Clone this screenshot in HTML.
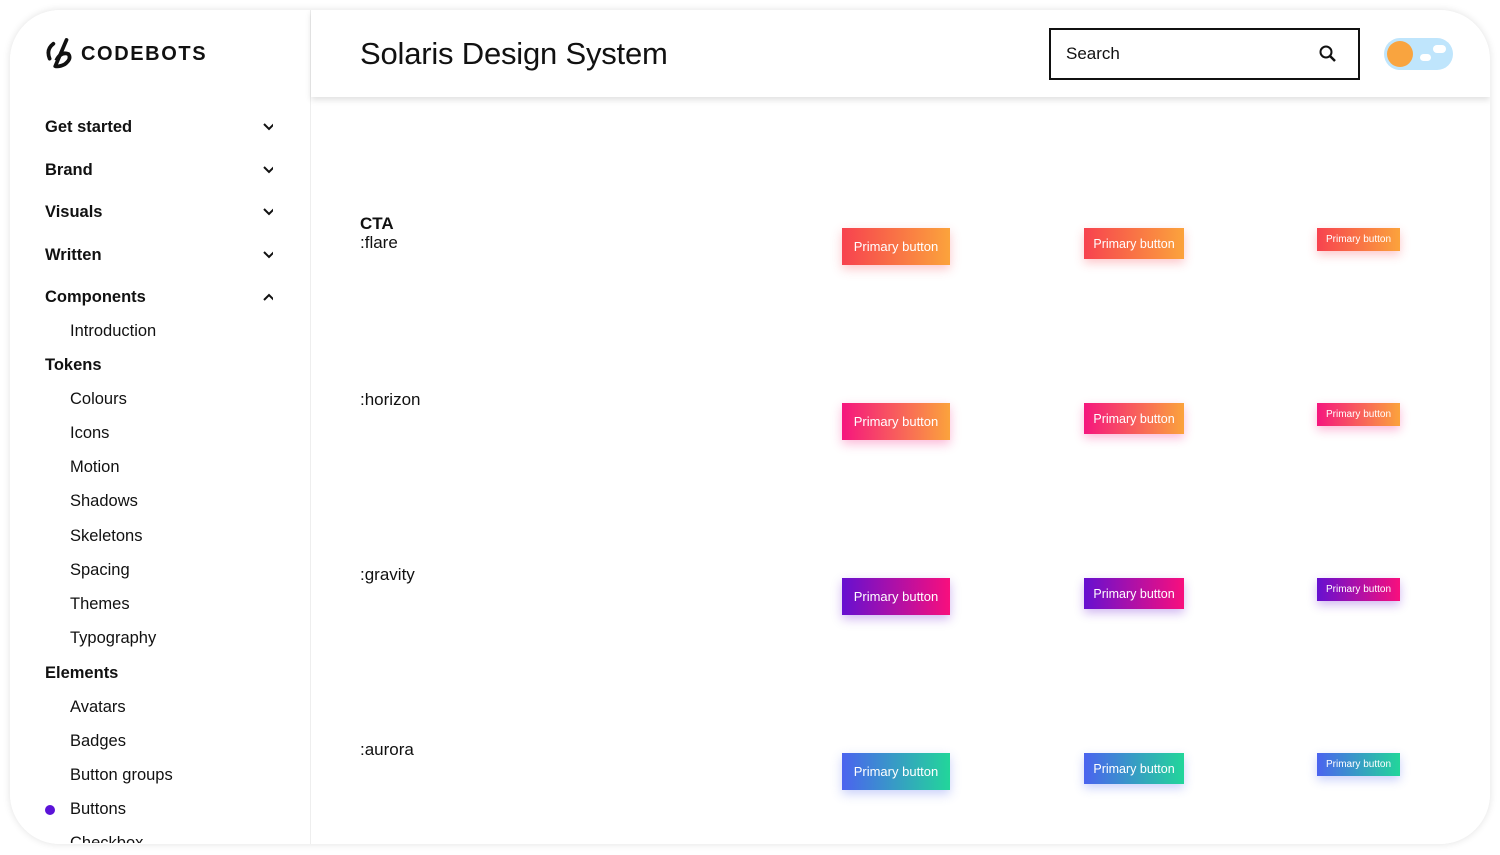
<!DOCTYPE html>
<html><head><meta charset="utf-8"><style>
*{margin:0;padding:0;box-sizing:border-box}
body{width:1500px;height:855px;background:#fff;font-family:"Liberation Sans",sans-serif;color:#111;position:relative;overflow:hidden}
.frame{position:absolute;left:10px;top:10px;width:1480px;height:834px;border-radius:50px;box-shadow:0 0 8px rgba(0,0,0,.12);overflow:hidden;background:#fff}
.side{position:absolute;left:0;top:0;width:301px;height:834px;background:#fff;border-right:1px solid #eee}
.main{position:absolute;left:301px;top:0;right:0;bottom:0;background:#fff}
.hdr{position:absolute;left:301px;top:0;right:0;height:87px;background:#fff;box-shadow:0 3px 6px rgba(0,0,0,.12);z-index:2}
.logo{position:absolute;left:34px;top:27px;display:flex;align-items:center;gap:7px;font-weight:bold;font-size:20px;letter-spacing:1.6px}
.nav{position:absolute;font-size:16.5px}
.nav.b{font-weight:bold;left:45px}
.chev{position:absolute;width:10px;height:10px}
h1{position:absolute;left:49px;top:26px;font-size:31px;font-weight:normal;letter-spacing:-.2px}
.search{position:absolute;left:738px;top:18px;width:311px;height:52px;border:2px solid #111;font-size:17px;padding:14px 15px}
.tog{position:absolute;left:1073px;top:28px;width:69px;height:32px;border-radius:16px;background:#bfe5fc}
.btn{position:absolute;color:#fff;display:flex;align-items:center;justify-content:center;white-space:nowrap}
.l1{width:108px;height:37px;font-size:13px}
.l2{width:100px;height:31px;font-size:12.5px}
.l3{width:83px;height:23px;font-size:10px}
.fl{background:linear-gradient(90deg,#f7424f,#fba33c);box-shadow:0 4px 10px rgba(247,66,79,.3)}
.ho{background:linear-gradient(90deg,#f5167e,#fba33c);box-shadow:0 4px 10px rgba(245,22,126,.3)}
.gr{background:linear-gradient(90deg,#6610d0,#f80f7d);box-shadow:0 4px 10px rgba(102,16,208,.3)}
.au{background:linear-gradient(90deg,#4b63ef,#22d69a);box-shadow:0 4px 10px rgba(75,99,239,.3)}
.lab{position:absolute;left:360px;font-size:17px}
</style></head><body>
<div class="frame">
<div class="side">
<div class="logo"><svg width="30" height="34" viewBox="0 0 32 34"><path d="M10 6 Q2 12 6 22" stroke="#111" stroke-width="4" fill="none" stroke-linecap="round"/><path d="M24 2 L12 30" stroke="#111" stroke-width="4" stroke-linecap="round"/><path d="M13 24 Q18 14 26 17 Q30 22 22 28 Q16 31 12 30" stroke="#111" stroke-width="4" fill="none"/></svg><span>CODEBOTS</span></div>
</div>
<div class="main"></div>
<div class="hdr"><h1>Solaris Design System</h1>
<div class="search">Search<svg style="position:absolute;right:20px;top:14px" width="20" height="20" viewBox="0 0 20 20"><circle cx="8" cy="8" r="5.5" stroke="#111" stroke-width="2" fill="none"/><path d="M12 12 L17 17" stroke="#111" stroke-width="2.5"/></svg></div>
<div class="tog"><div style="position:absolute;left:3px;top:3px;width:26px;height:26px;border-radius:50%;background:#f9a43f"></div><div style="position:absolute;left:36px;top:16px;width:11px;height:7px;border-radius:4px;background:#fff"></div><div style="position:absolute;left:49px;top:7px;width:13px;height:8px;border-radius:4px;background:#fff"></div></div>
</div>
</div>
<div class="nav b" style="top:118px">Get started</div>
<div class="nav b" style="top:161px">Brand</div>
<div class="nav b" style="top:203px">Visuals</div>
<div class="nav b" style="top:246px">Written</div>
<div class="nav b" style="top:288px">Components</div>
<svg class="chev" style="left:263px;top:123px" width="12" height="8"><path d="M1 1l5 5 5-5" stroke="#111" stroke-width="2" fill="none"/></svg>
<svg class="chev" style="left:263px;top:166px" width="12" height="8"><path d="M1 1l5 5 5-5" stroke="#111" stroke-width="2" fill="none"/></svg>
<svg class="chev" style="left:263px;top:208px" width="12" height="8"><path d="M1 1l5 5 5-5" stroke="#111" stroke-width="2" fill="none"/></svg>
<svg class="chev" style="left:263px;top:251px" width="12" height="8"><path d="M1 1l5 5 5-5" stroke="#111" stroke-width="2" fill="none"/></svg>
<svg class="chev" style="left:263px;top:293px" width="12" height="8"><path d="M1 7l5-5 5 5" stroke="#111" stroke-width="2" fill="none"/></svg>
<div class="nav" style="top:322px;left:70px">Introduction</div>
<div class="nav b" style="top:356px">Tokens</div>
<div class="nav" style="top:390px;left:70px">Colours</div>
<div class="nav" style="top:424px;left:70px">Icons</div>
<div class="nav" style="top:458px;left:70px">Motion</div>
<div class="nav" style="top:492px;left:70px">Shadows</div>
<div class="nav" style="top:527px;left:70px">Skeletons</div>
<div class="nav" style="top:561px;left:70px">Spacing</div>
<div class="nav" style="top:595px;left:70px">Themes</div>
<div class="nav" style="top:629px;left:70px">Typography</div>
<div class="nav b" style="top:664px">Elements</div>
<div class="nav" style="top:698px;left:70px">Avatars</div>
<div class="nav" style="top:732px;left:70px">Badges</div>
<div class="nav" style="top:766px;left:70px">Button groups</div>
<div style="position:absolute;left:45px;top:805px;width:10px;height:10px;border-radius:50%;background:#5b13d8"></div>
<div class="nav" style="top:800px;left:70px">Buttons</div>
<div class="nav" style="top:834px;left:70px;height:9px;overflow:hidden">Checkbox</div>
<div class="lab" style="top:214px;font-weight:bold">CTA</div>
<div class="lab" style="top:233px">:flare</div>
<div class="lab" style="top:390px">:horizon</div>
<div class="lab" style="top:565px">:gravity</div>
<div class="lab" style="top:740px">:aurora</div>
<div class="btn l1 fl" style="left:842px;top:228px">Primary button</div>
<div class="btn l2 fl" style="left:1084px;top:228px">Primary button</div>
<div class="btn l3 fl" style="left:1317px;top:228px">Primary button</div>
<div class="btn l1 ho" style="left:842px;top:403px">Primary button</div>
<div class="btn l2 ho" style="left:1084px;top:403px">Primary button</div>
<div class="btn l3 ho" style="left:1317px;top:403px">Primary button</div>
<div class="btn l1 gr" style="left:842px;top:578px">Primary button</div>
<div class="btn l2 gr" style="left:1084px;top:578px">Primary button</div>
<div class="btn l3 gr" style="left:1317px;top:578px">Primary button</div>
<div class="btn l1 au" style="left:842px;top:753px">Primary button</div>
<div class="btn l2 au" style="left:1084px;top:753px">Primary button</div>
<div class="btn l3 au" style="left:1317px;top:753px">Primary button</div>
</body></html>
